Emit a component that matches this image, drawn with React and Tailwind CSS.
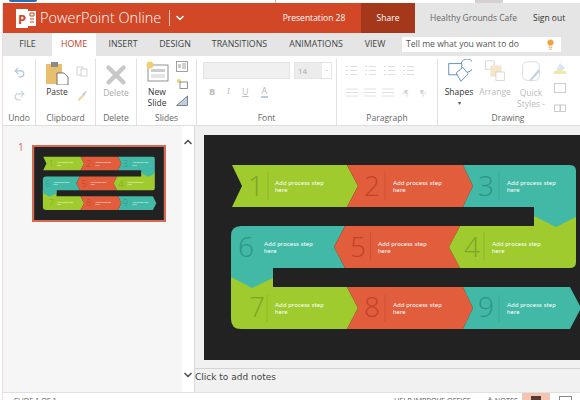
import React from "react";
import { ChevronDown, ChevronUp, Lightbulb, Undo2, Redo2, X } from "lucide-react";

const FONT = "font-['Open_Sans','Liberation_Sans',sans-serif]";

function Slide() {
  const label = (x, y) => (
    <text x={x} y={y} fill="#fff" fontSize="6.2" fontFamily="Lato, sans-serif" letterSpacing="0.15">
      <tspan x={x}>Add process step</tspan>
      <tspan x={x} dy="7.2">here</tspan>
    </text>
  );
  const num = (n, x, y, color) => (
    <text x={x} y={y} fill={color} fontSize="28" fontWeight="300" textAnchor="middle" fontFamily="Open Sans, sans-serif">
      {n}
    </text>
  );
  const G = "#9fcb2e", R = "#e25d3c", T = "#41b9a6";
  return (
    <svg viewBox="0 0 400 225" className="block w-full h-full">
      <rect width="400" height="225" fill="#222222" />
      <g transform="translate(-204 -135)">
        {/* row 3 */}
        <path d="M231 268 L273 268 L273 287 L347 287 L358 308 L347 329 L241 329 Q231 329 231 319 Z" fill={G} />
        <path d="M347 287 L463 287 L473 308 L463 329 L347 329 L358 308 Z" fill={R} />
        <path d="M463 287 L570 287 L581 308 L570 329 L463 329 L473 308 Z" fill={T} />
        {/* row 2 */}
        <path d="M241 226 L345 226 L334 247 L345 268 L273 268 L273 278 L252 288 L231 277 L231 236 Q231 226 241 226 Z" fill={T} />
        <path d="M345 226 L460 226 L449 247 L460 268 L345 268 L334 247 Z" fill={R} />
        <path d="M460 226 L534 226 L534 212 L576 212 L576 262 Q576 268 570 268 L460 268 L449 247 Z" fill={G} />
        {/* row 1 */}
        <path d="M232 165 L347 165 L358 186 L347 207 L232 207 L242 186 Z" fill={G} />
        <path d="M347 165 L463 165 L473 186 L463 207 L347 207 L358 186 Z" fill={R} />
        <path d="M463 165 L570 165 Q576 165 576 171 L576 217 L556 227 L534 216 L534 207 L463 207 L473 186 Z" fill={T} />
        <path d="M268 172V200M385 172V200M499 172V200M370.5 232V260M484 232V260M267 295V322M385 295V322M499 295V322" stroke="#000" strokeOpacity="0.12" strokeWidth="0.8" />
        {num("1", 256, 196, "#7ea32b")}
        {num("2", 372, 196, "#bf4328")}
        {num("3", 486, 196, "#2f9486")}
        {num("6", 246, 257, "#2f9486")}
        {num("5", 358, 257, "#bf4328")}
        {num("4", 472, 257, "#7ea32b")}
        {num("7", 257, 317, "#7ea32b")}
        {num("8", 372, 317, "#bf4328")}
        {num("9", 486, 317, "#2f9486")}
        {label(275, 185)}
        {label(393, 185)}
        {label(507, 185)}
        {label(264, 246)}
        {label(378, 246)}
        {label(492, 246)}
        {label(275, 307)}
        {label(393, 307)}
        {label(507, 307)}
      </g>
    </svg>
  );
}

function Tab({ children, active, className = "" }) {
  return (
    <div
      className={`flex items-center justify-center h-full ${
        active ? "bg-white text-[#c8401f]" : "text-[#444]"
      } ${className}`}
    >
      {children}
    </div>
  );
}

function Group({ label, width, children, last }) {
  return (
    <div
      className={`flex flex-col h-full shrink-0 ${last ? "" : "border-r border-[#e1e1e1]"}`}
      style={{ width }}
    >
      <div className="flex-1 min-h-0">{children}</div>
      <div className="h-[14px] text-center text-[8.5px] leading-[14px] text-[#666]">{label}</div>
    </div>
  );
}

function ListIcon() {
  return (
    <svg width="11" height="11" viewBox="0 0 11 11" stroke="#dedede" strokeWidth="1">
      <path d="M0 1.5h2M0 5.5h2M0 9.5h2M4 1.5h7M4 5.5h7M4 9.5h7" />
    </svg>
  );
}

function AlignIcon() {
  return (
    <svg width="12" height="9" viewBox="0 0 12 9" stroke="#e2e2e2" strokeWidth="1">
      <path d="M0 1h12M0 4.5h12M0 8h12" />
    </svg>
  );
}

function Ribbon() {
  return (
    <div className="flex h-[70px] shrink-0 border-b border-[#dedede] bg-white pt-[3px] text-[8.5px] text-[#999]">
      <Group label="Undo" width={33}>
        <div className="flex flex-col items-center gap-[10px] pt-[7px]">
          <Undo2 size={13} color="#a9c4dd" />
          <Redo2 size={13} color="#c5d3de" />
        </div>
      </Group>
      <Group label="Clipboard" width={60}>
        <div className="flex pl-[9px] pt-[2px]">
          <div className="flex flex-col items-center w-[24px]">
            <svg width="24" height="24" viewBox="0 0 24 24">
              <rect x="1" y="3" width="16" height="20" fill="#e8bf6e" />
              <rect x="6" y="1" width="7" height="5" fill="#8a8a8a" />
              <path d="M12 12h7l4 4v8H12z" fill="#fff" stroke="#555" strokeWidth="0.8" />
            </svg>
            <span className="text-[#333] mt-[1px]">Paste</span>
          </div>
          <div className="flex flex-col gap-[13px] pl-[7px] pt-[5px]">
            <svg width="12" height="11" viewBox="0 0 12 11" fill="none" stroke="#d4d4d4">
              <rect x="1" y="1" width="6" height="8" />
              <rect x="5" y="3" width="6" height="7" fill="#fff" />
            </svg>
            <svg width="12" height="11" viewBox="0 0 12 12">
              <path d="M1 11l5-6 2 2-5 5z" fill="#ecd9a8" />
              <path d="M6 5l4-4 1 1-3 5z" fill="#cccccc" />
            </svg>
          </div>
        </div>
      </Group>
      <Group label="Delete" width={41}>
        <div className="flex flex-col items-center pt-[1px]">
          <X size={30} color="#c8c8c8" strokeWidth={3.5} />
          <span className="text-[#aaa] -mt-[3px]">Delete</span>
        </div>
      </Group>
      <Group label="Slides" width={60}>
        <div className="flex pl-[8px] pt-[2px]">
          <div className="flex flex-col items-center w-[24px]">
            <svg width="24" height="22" viewBox="0 0 24 22">
              <rect x="3" y="4" width="20" height="16" fill="#fff" stroke="#777" strokeWidth="0.8" />
              <rect x="6" y="8" width="14" height="3" fill="#ccc" />
              <path d="M6 14h14M6 16h14" stroke="#bbb" strokeWidth="0.8" />
              <circle cx="5" cy="4" r="3.5" fill="#f0cf70" />
            </svg>
            <span className="text-[#333] leading-[11px] text-center mt-[3px]">New Slide</span>
          </div>
          <div className="flex flex-col gap-[6px] pl-[7px]">
            <svg width="12" height="11" viewBox="0 0 12 11" fill="none" stroke="#888" strokeWidth="0.8">
              <rect x="0.5" y="0.5" width="11" height="10" />
              <rect x="2" y="3" width="3" height="4" fill="#ccc" stroke="none" />
              <path d="M6 3h4M6 5h4M6 7h4" />
            </svg>
            <svg width="12" height="11" viewBox="0 0 12 11" fill="none" stroke="#777" strokeWidth="0.8">
              <circle cx="3" cy="3" r="2" fill="#f0cf70" stroke="none" />
              <rect x="4" y="4" width="7.5" height="6.5" />
            </svg>
            <svg width="12" height="11" viewBox="0 0 12 11">
              <path d="M0.5 10.5L11.5 1v9.5z" fill="#bdd0e3" stroke="#666" strokeWidth="0.8" />
            </svg>
          </div>
        </div>
      </Group>
      <Group label="Font" width={140}>
        <div className="flex flex-col pl-[6px] pt-[3px]">
          <div className="flex gap-[4px]">
            <div className="w-[87px] h-[17px] bg-[#f0f0f0] border border-[#e4e4e4]" />
            <div className="flex h-[17px] w-[38px] border border-[#e4e4e4]">
              <div className="flex-1 bg-[#ececec] pl-[3px] text-[8px] leading-[15px] text-[#aaa]">14</div>
              <div className="w-[9px] text-center leading-[13px] text-[#bbb]">-</div>
            </div>
          </div>
          <div className="flex items-center gap-[12px] pl-[6px] pt-[6px] text-[9px] text-[#bbb]">
            <span className="font-bold">B</span>
            <span className="italic font-serif">I</span>
            <span className="underline">U</span>
            <span className="border-b-2 border-[#b9cde0] leading-[11px] px-[1px]">A</span>
          </div>
        </div>
      </Group>
      <Group label="Paragraph" width={101}>
        <div className="flex flex-col gap-[12px] pl-[9px] pt-[6px]">
          <div className="flex gap-[8px]">
            <ListIcon />
            <ListIcon />
            <ListIcon />
            <ListIcon />
          </div>
          <div className="flex items-center gap-[6px]">
            <AlignIcon />
            <AlignIcon />
            <AlignIcon />
            <span className="ml-[2px] text-[7px] leading-[9px] text-[#ccc]">›¶</span>
            <span className="ml-[5px] text-[7px] leading-[9px] text-[#ccc]">¶‹</span>
          </div>
        </div>
      </Group>
      <Group label="Drawing" width={140} last>
        <div className="flex pl-[6px]">
          <div className="flex flex-col items-center w-[30px]">
            <svg width="26" height="26" viewBox="0 0 26 28" fill="none" stroke="#4a7fb0" strokeWidth="0.9">
              <rect x="2" y="5" width="14" height="12" />
              <path d="M10 15l7-6 6 7-8 8z" fill="#fff" />
              <path d="M15 5a7 7 0 1 1 7 9" />
            </svg>
            <span className="text-[#333] mt-[1px]">Shapes</span>
            <span className="text-[#555] text-[6px] leading-[8px]">▾</span>
          </div>
          <div className="flex flex-col items-center w-[32px] ml-[5px]">
            <svg width="24" height="26" viewBox="0 0 24 28" fill="none" stroke="#ccc" strokeWidth="0.8">
              <rect x="2" y="2" width="9" height="9" />
              <rect x="7" y="7" width="12" height="12" fill="#f5e5c9" stroke="none" />
              <rect x="13" y="14" width="9" height="9" fill="#fff" />
            </svg>
            <span className="text-[#bbb] mt-[1px]">Arrange</span>
          </div>
          <div className="flex flex-col items-center w-[34px] ml-[3px]">
            <svg width="24" height="26" viewBox="0 0 24 28" fill="none">
              <rect x="3" y="3" width="18" height="20" rx="5" stroke="#d8d8d8" />
              <path d="M10 23l10-12 2 2-10 11z" fill="#c5d4e4" />
            </svg>
            <span className="text-[#bbb] leading-[11px] mt-[2px]">Quick</span>
            <span className="text-[#bbb] leading-[11px] whitespace-nowrap">Styles -</span>
          </div>
          <div className="flex flex-col items-center gap-[9px] pt-[3px] w-[20px] ml-[2px]">
            <svg width="12" height="12" viewBox="0 0 12 12">
              <path d="M6 1l5 5-3 3H2z" fill="#dbe5ef" />
              <rect x="0" y="9" width="12" height="3" fill="#f4e7a0" />
            </svg>
            <svg width="12" height="10" viewBox="0 0 12 10" fill="none" stroke="#ccc">
              <rect x="0.5" y="0.5" width="11" height="9" />
            </svg>
            <svg width="12" height="10" viewBox="0 0 12 10" fill="none" stroke="#ccc">
              <rect x="0.5" y="3" width="6" height="6.5" />
              <rect x="6" y="3" width="5.5" height="6.5" />
            </svg>
          </div>
        </div>
      </Group>
    </div>
  );
}

export default function App() {
  return (
    <div className={`w-[580px] h-[400px] overflow-hidden bg-white ${FONT} flex flex-col`}>
      <div className="flex h-[3px] shrink-0 bg-white">
        <div className="ml-[9px] w-[28px] h-[2px] rounded-b-full bg-[#2a6fb5]" />
        <div className="ml-[238px] w-px h-[3px] bg-[#bbb]" />
        <div className="ml-[199px] w-[28px] h-[3px] bg-[#d6d0d0]" />
      </div>
      <div className="flex flex-col flex-1 min-h-0 ml-[2px] border-l border-[#efdcdc]">
        <header className="flex h-[30px] shrink-0 bg-[#d24726] text-white">
          <div className="flex items-center pl-[13px] w-[264px]">
            <svg width="20" height="19" viewBox="0 0 20 19" className="shrink-0">
              <rect x="8" y="2" width="12" height="15" fill="#fff" />
              <rect x="0" y="0" width="12" height="19" fill="#fff" />
              <text x="2" y="14.5" fill="#d24726" fontSize="13" fontWeight="700" fontFamily="Open Sans, sans-serif">P</text>
              <path d="M14 4h4v3h-4zM14 10h4M14 13h4" stroke="#d24726" strokeWidth="1" fill="none" />
            </svg>
            <span className="ml-[4px] text-[14.5px] font-light">PowerPoint Online</span>
            <span className="ml-[8px] h-[16px] border-l border-white/70" />
            <ChevronDown size={12} strokeWidth={3} className="ml-[4px]" />
          </div>
          <div className="w-[94px] pt-[8px] text-[8.5px] leading-[14px] text-center">Presentation 28</div>
          <div className="flex items-center justify-center w-[54px] bg-[#a5371b] text-[8.5px]">Share</div>
          <div className="flex flex-1 items-center bg-[#e5e5e5] text-[8.5px]">
            <span className="ml-[15px] text-[#666]">Healthy Grounds Cafe</span>
            <span className="ml-[16px] text-[#333]">Sign out</span>
          </div>
        </header>
        <nav className="flex items-center h-[23px] shrink-0 bg-[#e5e5e5] text-[8.8px]">
          <Tab className="w-[49px]">FILE</Tab>
          <Tab active className="w-[44px]">HOME</Tab>
          <Tab className="w-[54px]">INSERT</Tab>
          <Tab className="w-[50px]">DESIGN</Tab>
          <Tab className="w-[79px]">TRANSITIONS</Tab>
          <Tab className="w-[74px]">ANIMATIONS</Tab>
          <Tab className="w-[44px]">VIEW</Tab>
          <div className="flex items-center justify-between ml-[5px] w-[159px] h-[15px] bg-white pl-[4px] pr-[5px] text-[8.6px] text-[#555]">
            Tell me what you want to do
            <Lightbulb size={11} color="#e9a53a" fill="#e9a53a" />
          </div>
        </nav>
        <Ribbon />
        <div className="flex flex-1 min-h-0">
          <aside className="flex w-[179px] shrink-0 bg-[#f6f6f6] pl-[15px] pt-[14px]">
            <span className="w-[14px] text-[10px] leading-[14px] text-[#d9694f]">1</span>
            <div className="w-[134px] h-[77px] border-2 border-[#d9694f] mt-[5px]">
              <Slide />
            </div>
          </aside>
          <div className="flex flex-col justify-between items-center w-[13px] shrink-0 border-r border-[#d9d9d9] pt-[10px] pb-[11px]">
            <ChevronUp size={12} strokeWidth={3.5} color="#555" />
            <ChevronDown size={12} strokeWidth={3.5} color="#555" />
          </div>
          <main className="flex flex-col flex-1 min-w-0 bg-[#f1f1f1]">
            <div className="flex-1 min-h-0 pl-[9px] pt-[9px] overflow-hidden">
              <div className="w-[400px] h-[225px]">
                <Slide />
              </div>
            </div>
            <div className="h-[24px] shrink-0 border-t border-[#d4d4d4] text-[9px] leading-[14px] pt-px font-['DejaVu_Sans'] text-[#444]">
              Click to add notes
            </div>
          </main>
        </div>
        <footer className="flex items-start justify-between h-[8px] shrink-0 border-t border-[#e0e0e0] bg-white text-[7.3px] leading-[11px] text-[#555] overflow-hidden">
          <span className="pl-[11px] pt-[2px]">SLIDE 1 OF 1</span>
          <div className="flex items-start">
            <span className="pt-[2px]">HELP IMPROVE OFFICE</span>
            <span className="ml-[16px] pt-[2px]">≜ NOTES</span>
            <div className="flex justify-center ml-[4px] w-[28px] h-[8px] bg-[#f4c5b3] pt-[3px]">
              <div className="w-[10px] h-[5px] bg-[#5b3a30]" />
            </div>
            <div className="flex justify-center w-[30px] pt-[3px]">
              <div className="w-[13px] h-[5px] border border-[#888]" />
            </div>
          </div>
        </footer>
      </div>
    </div>
  );
}
